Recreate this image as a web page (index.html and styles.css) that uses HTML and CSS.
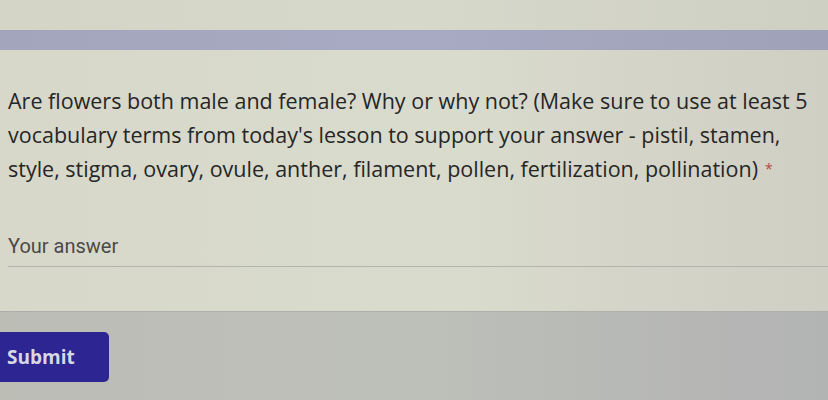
FILE: index.html
```html
<!DOCTYPE html>
<html lang="en">

<head>
    <meta charset="UTF-8">
    <meta name="viewport" content="width=device-width, initial-scale=1.0">
    <title>Flower Quiz</title>
    <link rel="stylesheet" href="styles.css">
</head>

<body>
    <div class="page">
        <div class="topBar"></div>

        <div class="card">
            <p class="question">
                Are flowers both male and female? Why or why not? (Make sure to use at least 5<br>
                vocabulary terms from today's lesson to support your answer - pistil, stamen,<br>
                style, stigma, ovary, ovule, anther, filament, pollen, fertilization, pollination)<span class="required">*</span>
            </p>
            <div class="answer">Your answer</div>
        </div>

        <div class="actions">
            <button class="submit">Submit</button>
        </div>
    </div>
</body>

</html>
```

FILE: styles.css
```css
body {
    margin: 0;
    padding: 0;
    background-color: #bbbcb4;
    font-family: "Open Sans", Arial, sans-serif;
}

.page {
    width: 828px;
    height: 400px;
    overflow: hidden;
    background: linear-gradient(90deg, #d4d5c7 0%, #d6d8ca 50%, #cfd0c4 100%);
    padding-top: 30px;
    box-sizing: border-box;
}

.topBar {
    height: 20px;
    background: linear-gradient(90deg, #a3a5bd 0%, #a7aac2 50%, #9fa1b9 100%);
}

.card {
    height: 262px;
    padding: 34px 0 0 8px;
    box-sizing: border-box;
    background: linear-gradient(90deg, #d7d8ca 0%, #d9dbcd 55%, #cfcfc3 100%);
    border-bottom: 1px solid #aeb0aa;
}

.question {
    margin: 0;
    white-space: nowrap;
    font-size: 21.5px;
    line-height: 34px;
    color: #262626;
}

.required {
    margin-left: 7px;
    color: #b34a3e;
    font-size: 14px;
    vertical-align: top;
}

.answer {
    margin-top: 48px;
    padding-bottom: 8px;
    font-family: Roboto, Arial, sans-serif;
    font-size: 20px;
    color: #4a4a48;
    border-bottom: 1px solid #b3b4ad;
}

.actions {
    height: 88px;
    padding-top: 20px;
    box-sizing: border-box;
    background: linear-gradient(90deg, #bcbdb5 0%, #bdbfb9 50%, #b2b3b3 100%);
}

.submit {
    width: 109px;
    height: 50px;
    margin: 0;
    padding: 0 0 0 7px;
    text-align: left;
    border: none;
    border-radius: 0 5px 5px 0;
    background-color: #2c2592;
    color: #d8d8e4;
    font-family: "Open Sans", Arial, sans-serif;
    font-weight: 700;
    font-size: 19px;
    cursor: pointer;
}
```
